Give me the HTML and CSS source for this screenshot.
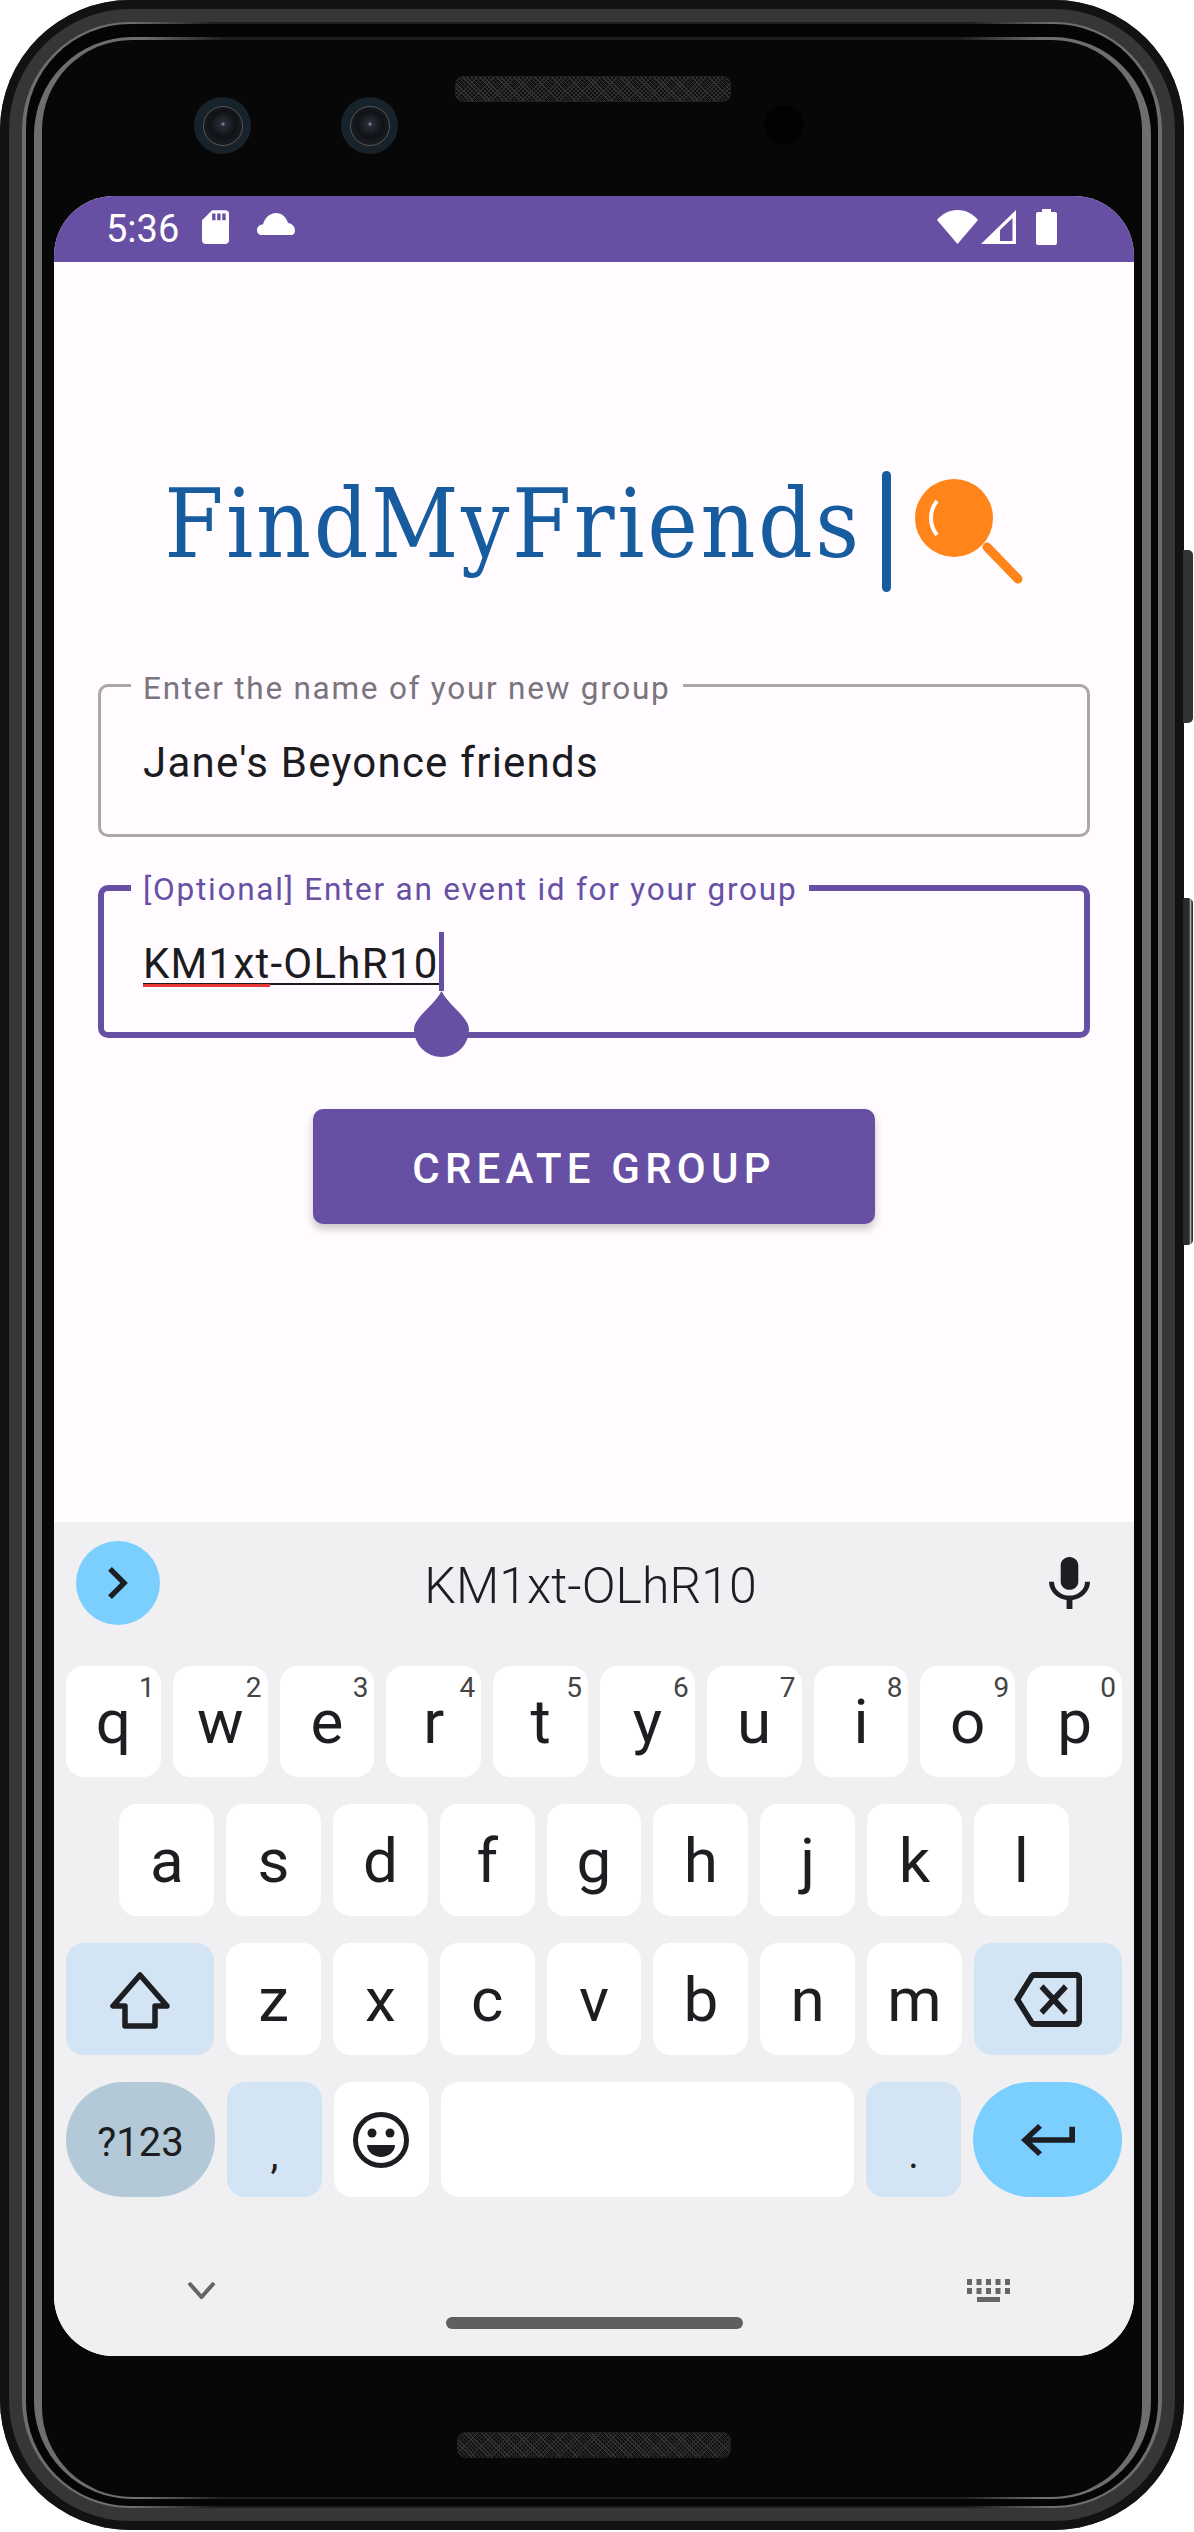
FILE: index.html
```html
<!DOCTYPE html>
<html lang="en">
<head>
  <meta charset="UTF-8" />
  <meta name="viewport" content="width=device-width, initial-scale=1.0" />
  <title>FindMyFriends</title>
  <link rel="stylesheet" href="styles.css">
</head>
<body>

  <div class="phone">
    <div class="side-button side-button-power"></div>
    <div class="side-button side-button-volume"></div>

    <div class="rim rim-outer">
      <div class="gap">
        <div class="rim rim-inner">
          <div class="bezel">

            <!-- Cameras, earpiece and sensor -->
            <div class="sensors">
              <div class="camera"><div class="lens"></div></div>
              <div class="camera camera-second"><div class="lens"></div></div>
              <div class="speaker"></div>
              <div class="proximity"></div>
            </div>

            <div class="screen">
              <div class="status-bar">
                <span class="clock">5:36</span>
                <svg class="status-sd" viewBox="4 2 16 20" width="27" height="34" fill="#fff"><path d="M18 2h-8L4.02 8 4 20c0 1.1.9 2 2 2h12c1.1 0 2-.9 2-2V4c0-1.1-.9-2-2-2zm-6 6h-2V4h2v4zm3 0h-2V4h2v4zm3 0h-2V4h2v4z"/></svg>
                <svg class="status-cloud" viewBox="0 0 38 22" width="38" height="22" fill="#fff"><path d="M4.5 22C1.5 22 0 19.5 0 17c0-3.5 3-5.5 6-5.5C7.5 5 13 0 19 0c6 0 10 4 12 10 4 .5 7 3.500 7 7.500 0 2.500-1.500 4.500-3.500 4.500Z"/></svg>
                <div class="status-right">
                  <svg viewBox="0 0 41 34" width="41" height="34" fill="#fff"><path d="M20.500 34 0 10C5 4 12 0 20.500 0 29 0 36 4 41 10Z"/></svg>
                  <svg class="status-signal" viewBox="0 0 35 34" width="35" height="34" fill="#fff" fill-rule="evenodd"><path d="M35 0V34H0ZM31.500 8V31H19V20Z"/></svg>
                  <svg class="status-battery" viewBox="0 0 21 36" width="21" height="36" fill="#fff"><path d="M6 0h9v3h4a2 2 0 0 1 2 2v29a2 2 0 0 1-2 2H2a2 2 0 0 1-2-2V5a2 2 0 0 1 2-2h4z"/></svg>
                </div>
              </div>

              <div class="content">
                <div class="logo">
                  <span class="logo-text">FindMyFriends</span>
                  <svg class="logo-mark" viewBox="0 0 144 121" width="144" height="121">
                    <rect x="2" y="0" width="9" height="121" rx="4.500" fill="#175c9f"/>
                    <circle cx="74" cy="47" r="39" fill="#ff851b"/>
                    <path d="M57 30a27 27 0 0 0 0 34" fill="none" stroke="#fffbfe" stroke-width="4"/>
                    <path d="M107 76 138 108" stroke="#ff851b" stroke-width="9" stroke-linecap="round"/>
                  </svg>
                </div>

                <div class="field">
                  <label class="field-label">Enter the name of your new group</label>
                  <div class="field-value">Jane's Beyonce friends</div>
                </div>

                <div class="field field-focused">
                  <label class="field-label">[Optional] Enter an event id for your group</label>
                  <div class="field-value">
                    <span class="composing"><span class="typo">KM1xt</span>-OLhR10</span>
                    <span class="caret"></span>
                    <svg class="caret-handle" viewBox="0 0 55 66" width="55" height="66" fill="#6750a4"><path d="M27.500 0C34 14 55 26 55 38.500A27.500 27.500 0 0 1 0 38.500C0 26 21 14 27.500 0Z"/></svg>
                  </div>
                </div>

                <button class="create-button">CREATE GROUP</button>
              </div>

              <!-- Keyboard -->
              <div class="keyboard">
                <div class="suggestions">
                  <div class="expand">
                    <svg viewBox="8.590 6 7.410 12" width="20" height="32" fill="#1c1e21"><path d="M8.590 16.590 13.170 12 8.590 7.410 10 6l6 6-6 6z"/></svg>
                  </div>
                  <span class="suggestion">KM1xt-OLhR10</span>
                  <svg class="mic" viewBox="5 2 14 19" width="41" height="52" preserveAspectRatio="none" fill="#1c1e21"><path d="M12 14c1.660 0 3-1.340 3-3V5c0-1.660-1.340-3-3-3S9 3.340 9 5v6c0 1.660 1.340 3 3 3zm5.300-3c0 3-2.540 5.100-5.300 5.100S6.700 14 6.700 11H5c0 3.410 2.720 6.230 6 6.720V21h2v-3.280c3.280-.48 6-3.300 6-6.720h-1.700z"/></svg>
                </div>

                <div class="key-row key-row-first">
                  <div class="key">q<span class="hint">1</span></div>
                  <div class="key">w<span class="hint">2</span></div>
                  <div class="key">e<span class="hint">3</span></div>
                  <div class="key">r<span class="hint">4</span></div>
                  <div class="key">t<span class="hint">5</span></div>
                  <div class="key">y<span class="hint">6</span></div>
                  <div class="key">u<span class="hint">7</span></div>
                  <div class="key">i<span class="hint">8</span></div>
                  <div class="key">o<span class="hint">9</span></div>
                  <div class="key">p<span class="hint">0</span></div>
                </div>

                <div class="key-row key-row-center">
                  <div class="key">a</div>
                  <div class="key">s</div>
                  <div class="key">d</div>
                  <div class="key">f</div>
                  <div class="key">g</div>
                  <div class="key">h</div>
                  <div class="key">j</div>
                  <div class="key">k</div>
                  <div class="key">l</div>
                </div>

                <div class="key-row">
                  <div class="key key-wide key-action">
                    <svg viewBox="0 0 62 59" width="62" height="59" fill="none" stroke="#1c1e21" stroke-width="5.500" stroke-linejoin="round"><path d="M31 5 4 36H16V56H46V36H58Z"/></svg>
                  </div>
                  <div class="key">z</div>
                  <div class="key">x</div>
                  <div class="key">c</div>
                  <div class="key">v</div>
                  <div class="key">b</div>
                  <div class="key">n</div>
                  <div class="key">m</div>
                  <div class="key key-wide key-action">
                    <svg viewBox="0 3 24 18" width="68" height="55" preserveAspectRatio="none" fill="#1c1e21"><path d="M22 3H7c-.69 0-1.230.35-1.590.88L0 12l5.410 8.110c.36.53.9.89 1.590.89h15c1.100 0 2-.9 2-2V5c0-1.100-.9-2-2-2zm0 16H7.070L2.400 12l4.660-7H22v14zM10.410 17 14 13.410 17.590 17 19 15.590 15.410 12 19 8.410 17.590 7 14 10.590 10.410 7 9 8.410 12.590 12 9 15.590z"/></svg>
                  </div>
                </div>

                <div class="key-row key-row-last">
                  <div class="key key-wide key-pill key-symbols">?123</div>
                  <div class="key key-action key-punct">,</div>
                  <div class="key">
                    <svg viewBox="0 0 56 56" width="56" height="56"><circle cx="28" cy="28" r="25.500" fill="none" stroke="#1c1e21" stroke-width="5"/><circle cx="19" cy="21" r="4.500" fill="#1c1e21"/><circle cx="37" cy="21" r="4.500" fill="#1c1e21"/><path d="M14 33H42C42 40 35 45 28 45 21 45 14 40 14 33Z" fill="#1c1e21"/></svg>
                  </div>
                  <div class="key key-space"></div>
                  <div class="key key-action key-punct">.</div>
                  <div class="key key-wide key-pill key-enter">
                    <svg viewBox="2 6 19 12" width="54" height="32" preserveAspectRatio="none" fill="#1c1e21"><path d="M19 7v4H5.830l3.580-3.590L8 6l-6 6 6 6 1.410-1.410L5.830 13H21V7z"/></svg>
                  </div>
                </div>

                <div class="nav-row">
                  <svg viewBox="0 0 29 17" width="29" height="17" fill="none" stroke="#666" stroke-width="4"><path d="M2 1 14.500 15 27 1"/></svg>
                  <svg viewBox="0 0 43 23" width="43" height="23" fill="#666">
                    <path d="M0 0h5v6H0zM9.500 0h5v6h-5zM19 0h5v6h-5zM28.500 0h5v6h-5zM38 0h5v6h-5z"/>
                    <path d="M0 9h5v6H0zM9.500 9h5v6h-5zM19 9h5v6h-5zM28.500 9h5v6h-5zM38 9h5v6h-5z"/>
                    <path d="M10 18h23v5H10z"/>
                  </svg>
                </div>
                <div class="home-pill"></div>
              </div>
            </div>

            <div class="chin">
              <div class="speaker speaker-bottom"></div>
            </div>

          </div>
        </div>
      </div>
    </div>
  </div>

</body>
</html>
```

FILE: styles.css
```css
body {
  margin: 0;
  background: #fff;
  font-family: Roboto, 'Noto Sans', sans-serif;
  color: #1c1b1f;
}

/* Device frame */
.phone {
  position: relative;
  width: 1184px;
  height: 2530px;
  box-sizing: border-box;
  padding: 22px;
  border-radius: 130px;
  background: #363636;
  box-shadow: inset 0 0 0 9px #121212;
}

.side-button {
  position: absolute;
  left: 1183px;
  width: 10px;
  border-radius: 0 5px 5px 0;
  background: #333;
}

.side-button-power {
  top: 550px;
  height: 173px;
}

.side-button-volume {
  top: 898px;
  height: 347px;
  background: linear-gradient(to right, #2a2a2a 60%, #aaa 75%, #333 90%);
}

.rim {
  background: linear-gradient(to right, #6e6e6e 0, #6e6e6e 110px, #1e1e1e 190px, #1e1e1e calc(100% - 190px), #6e6e6e calc(100% - 110px), #6e6e6e 100%);
}

.rim-outer {
  padding: 2px 4px;
  border-radius: 108px;
}

.gap {
  padding: 13px 7px 7px 8px;
  border-radius: 104px;
  background: #050505;
}

.rim-inner {
  padding: 3px 9px 2px 8px;
  border-radius: 98px;
}

.bezel {
  padding: 0 8px 0 12px;
  border-radius: 90px;
  background: #070707;
}

.sensors {
  display: flex;
  align-items: flex-start;
  height: 156px;
  box-sizing: border-box;
  padding: 36px 0 0 140px;
}

.camera {
  display: flex;
  justify-content: center;
  align-items: center;
  width: 57px;
  height: 57px;
  margin-top: 21px;
  border-radius: 50%;
  background: #18222a;
}

.camera-second {
  margin-left: 90px;
}

.lens {
  width: 38px;
  height: 38px;
  border-radius: 50%;
  border: 1px solid #555;
  background: radial-gradient(circle at 50% 45%, #9aa4b5 0, #2a2d38 8%, #101216 45%, #23262c 100%);
}

.speaker {
  width: 276px;
  height: 26px;
  box-sizing: border-box;
  margin-left: 57px;
  border: 1px solid #1e1e1e;
  border-radius: 8px;
  background-color: #101010;
  background-image: repeating-linear-gradient(45deg, #333 0, #333 1px, transparent 1px, transparent 3px), repeating-linear-gradient(-45deg, #2a2a2a 0, #2a2a2a 1px, transparent 1px, transparent 3px);
}

.proximity {
  width: 40px;
  height: 40px;
  margin: 29px 0 0 33px;
  border-radius: 50%;
  background: #020202;
}

.chin {
  height: 141px;
  padding-top: 76px;
  box-sizing: border-box;
}

.speaker-bottom {
  margin: 0 auto;
  width: 274px;
}

/* Screen */
.screen {
  display: flex;
  flex-direction: column;
  height: 2160px;
  overflow: hidden;
  border-radius: 60px;
  background: #fffbfe;
}

.status-bar {
  display: flex;
  align-items: center;
  height: 66px;
  box-sizing: border-box;
  padding: 0 77px 0 52px;
  background: #6750a4;
}

.clock {
  font-size: 38px;
  color: #fff;
}

.status-sd {
  margin-left: 23px;
  margin-top: -4px;
}

.status-cloud {
  margin-left: 28px;
  margin-top: -10px;
}

.status-right {
  display: flex;
  align-items: center;
  margin-left: auto;
  margin-top: -4px;
}

.status-signal {
  margin-left: 3px;
}

.status-battery {
  margin-left: 20px;
}

.content {
  flex: 1;
  display: flex;
  flex-direction: column;
  padding: 209px 44px 0;
}

.logo {
  display: flex;
  justify-content: center;
  height: 121px;
  margin-bottom: 92px;
}

.logo-text {
  margin-top: -7px;
  font-family: 'DejaVu Serif Condensed', 'DejaVu Serif', serif;
  font-size: 95px;
  line-height: 121px;
  letter-spacing: 2.6px;
  color: #175c9f;
}

.logo-mark {
  margin-left: 18px;
}

/* Outlined text fields */
.field {
  display: flex;
  flex-direction: column;
  height: 153px;
  box-sizing: border-box;
  margin-bottom: 48px;
  padding: 0 42px;
  border: 3px solid #a9a7aa;
  border-radius: 10px;
}

.field-label {
  align-self: flex-start;
  margin: -17px 0 0 -12px;
  padding: 0 12px;
  background: #fffbfe;
  font-size: 31.5px;
  line-height: 37px;
  letter-spacing: 1.75px;
  color: #79747e;
}

.field-value {
  position: relative;
  align-self: flex-start;
  margin-top: 31px;
  font-size: 42px;
  line-height: 50px;
  letter-spacing: 1.25px;
}

.field-focused {
  padding: 0 39px;
  border: 6px solid #6750a4;
}

.field-focused .field-label {
  margin-top: -20px;
  color: #6750a4;
}

.composing {
  background: linear-gradient(#1c1b1f, #1c1b1f) no-repeat 0 44px / 100% 2px;
}

.typo {
  background: linear-gradient(#e53935, #e53935) no-repeat 0 45px / 100% 3px;
}

.caret {
  position: absolute;
  top: -7px;
  left: 100%;
  width: 5px;
  height: 59px;
  background: #6750a4;
}

.caret-handle {
  position: absolute;
  top: 52px;
  left: calc(100% - 25px);
}

.create-button {
  align-self: center;
  width: 562px;
  height: 115px;
  margin-top: 23px;
  padding-top: 5px;
  border: none;
  border-radius: 10px;
  background: #6750a4;
  box-shadow: 0 5px 8px rgba(0, 0, 0, 0.22);
  font-family: Roboto, sans-serif;
  font-size: 42px;
  font-weight: 500;
  letter-spacing: 5.2px;
  color: #fff;
}

/* Keyboard */
.keyboard {
  padding: 19px 12px 27px;
  background: #f0f0f2;
}

.suggestions {
  display: flex;
  align-items: center;
  height: 84px;
  margin-bottom: 41px;
  padding: 0 32px 0 10px;
}

.expand {
  display: flex;
  justify-content: center;
  align-items: center;
  width: 84px;
  height: 84px;
  border-radius: 50%;
  background: #7acfff;
}

.suggestion {
  flex: 1;
  padding: 5px 28px 0 0;
  text-align: center;
  font-size: 50px;
  font-weight: 300;
  color: #1c1e21;
}

.key-row {
  display: flex;
  gap: 12px;
  height: 112px;
  margin-bottom: 27px;
}

.key-row-first {
  height: 111px;
}

.key-row-center {
  justify-content: center;
}

.key-row-last {
  height: 115px;
  margin-bottom: 0;
}

.key {
  position: relative;
  flex: 0 0 94.8px;
  display: flex;
  justify-content: center;
  align-items: center;
  border-radius: 18px;
  background: #fff;
  font-size: 62px;
  color: #1c1e21;
}

.hint {
  position: absolute;
  top: 5px;
  right: 6px;
  font-size: 28px;
  line-height: 33px;
  color: #444;
}

.key-wide {
  flex: 1;
}

.key-action {
  background: #d3e4f4;
}

.key-pill {
  border-radius: 58px;
}

.key-symbols {
  box-sizing: border-box;
  padding-top: 5px;
  background: #b3c9d7;
  font-size: 40px;
}

.key-enter {
  background: #7acfff;
}

.key-punct {
  align-items: flex-end;
  padding-bottom: 22px;
  box-sizing: border-box;
  font-size: 40px;
  line-height: 40px;
}

.key-space {
  flex: 1;
}

.key-row-last .key-wide {
  flex: 0 0 149px;
}

.nav-row {
  display: flex;
  justify-content: space-between;
  align-items: center;
  margin-top: 82px;
  padding: 0 112px 0 121px;
}

.home-pill {
  width: 297px;
  height: 12px;
  margin: 15px auto 0;
  border-radius: 6px;
  background: #5f5f5f;
}
```
